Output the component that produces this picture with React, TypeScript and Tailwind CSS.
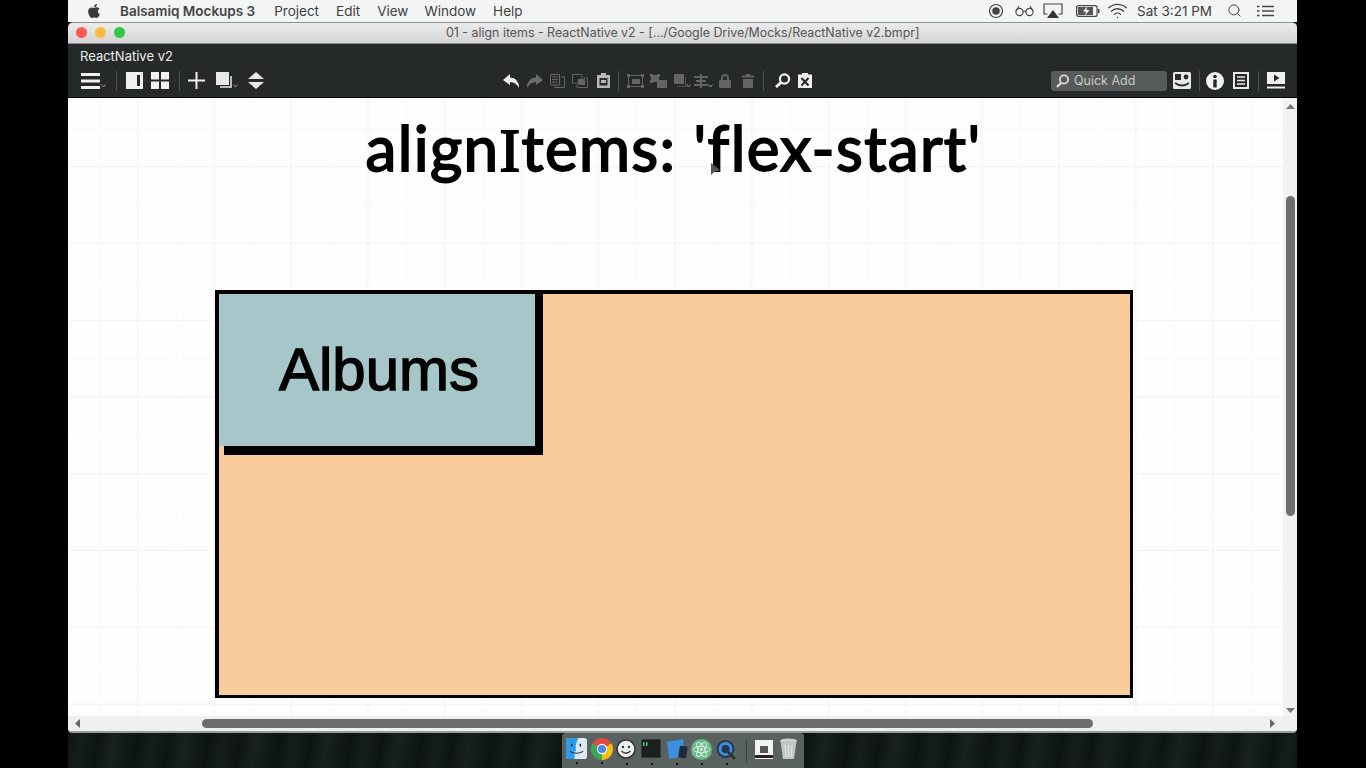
import React from 'react';
import { FaApple } from 'react-icons/fa';
import { Search, Wifi } from 'lucide-react';

const Chevron = ({ className = '' }: { className?: string }) => (
	<svg width="5" height="4" viewBox="0 0 5 4" className={className}>
		<path d="M0.5 0.5 L2.5 3 L4.5 0.5" fill="none" stroke="#9a9a9a" strokeWidth="1" />
	</svg>
);

const Sep = ({ className = '' }: { className?: string }) => <div className={`h-[20px] w-px bg-[#4a4d4e] ${className}`} />;

const MenuBar = () => (
	<div className="flex h-[22px] items-center bg-[#f3f4f4] text-[14px] text-[#3f3f3f] font-['Inter',sans-serif]">
		<FaApple className="ml-[18px] text-[#3a3a3a]" size={16} />
		<span className="ml-[18px] font-semibold text-[13.5px] text-[#444]">Balsamiq Mockups 3</span>
		<span className="ml-[19px] text-[13.5px]">Project</span>
		<span className="ml-[17px] text-[13.5px]">Edit</span>
		<span className="ml-[17px] text-[13.5px]">View</span>
		<span className="ml-[16px] text-[13.5px]">Window</span>
		<span className="ml-[17px] text-[13.5px]">Help</span>
		<div className="ml-auto flex items-center">
			<svg width="16" height="16" viewBox="0 0 16 16">
				<circle cx="8" cy="8" r="6.5" fill="none" stroke="#444" strokeWidth="1.2" />
				<circle cx="8" cy="8" r="3.8" fill="#444" />
			</svg>
			<svg width="19" height="12" viewBox="0 0 19 12" className="ml-[11px]">
				<circle cx="4.5" cy="7" r="3.6" fill="none" stroke="#444" strokeWidth="1.1" />
				<circle cx="14.5" cy="7" r="3.6" fill="none" stroke="#444" strokeWidth="1.1" />
				<path d="M8 7 Q9.5 5.5 11 7 M1 6 L4 1 M18 6 L15 1" fill="none" stroke="#444" strokeWidth="1.1" />
			</svg>
			<svg width="20" height="16" viewBox="0 0 20 16" className="ml-[9px]">
				<path d="M4.5 11 H1 V1 H19 V11 H15.5" fill="none" stroke="#444" strokeWidth="1.2" />
				<path d="M10 7 L16 15 H4 Z" fill="#333" />
			</svg>
			<svg width="24" height="12" viewBox="0 0 24 12" className="ml-[13px]">
				<rect x="0.6" y="0.6" width="20.5" height="10.8" rx="2" fill="none" stroke="#444" strokeWidth="1.2" />
				<rect x="2" y="2" width="15" height="8" fill="#555" />
				<path d="M11 1.5 L7 6.5 H10 L9 10.5 L13.5 5 H10.5 Z" fill="#f3f4f4" />
				<rect x="22" y="4" width="1.5" height="4" fill="#444" />
			</svg>
			<Wifi size={21} strokeWidth={1.5} className="ml-[7px] text-[#444]" />
			<span className="ml-[9px] text-[13.5px] whitespace-nowrap">Sat 3:21 PM</span>
			<Search size={15} strokeWidth={1.6} className="ml-[15px] text-[#444]" />
			<svg width="17" height="12" viewBox="0 0 17 12" className="ml-[15px] mr-[23px]">
				<path d="M5 1.5 H17 M5 6 H17 M5 10.5 H17" stroke="#444" strokeWidth="1.6" />
				<path d="M0 1.5 H2.5 M0 6 H2.5 M0 10.5 H2.5" stroke="#444" strokeWidth="1.6" />
			</svg>
		</div>
	</div>
);

const TitleBar = () => (
	<div className="relative flex h-[22px] items-center rounded-t-[5px] border-y border-y-[#8f9091] bg-gradient-to-b from-[#ececec] to-[#d4d4d4]">
		<div className="ml-[8px] flex gap-[8px]">
			<div className="size-[11px] rounded-full bg-[#fc5b57]" />
			<div className="size-[11px] rounded-full bg-[#fdbc40]" />
			<div className="size-[11px] rounded-full bg-[#33c748]" />
		</div>
		<div className="ml-[321px] text-[12.4px] text-[#555] whitespace-nowrap font-['Inter',sans-serif]">
			01 - align items - ReactNative v2 - [.../Google Drive/Mocks/ReactNative v2.bmpr]
		</div>
	</div>
);

const LeftTools = () => (
	<div className="ml-[13px] flex items-center">
		<svg width="19" height="16" viewBox="0 0 19 16">
			<path d="M0 1.5 H19 M0 8 H19 M0 14.5 H19" stroke="#efefef" strokeWidth="3" />
		</svg>
		<Chevron className="ml-[1px] mt-[10px]" />
		<Sep className="ml-[10px]" />
		<svg width="17" height="17" viewBox="0 0 17 17" className="ml-[9px]">
			<path d="M0 0 H17 V17 H0 Z M11 3 V14 H14 V3 Z" fill="#f0f0f0" fillRule="evenodd" />
		</svg>
		<svg width="18" height="17" viewBox="0 0 18 17" className="ml-[8px]">
			<path d="M0 0 H8 V7.5 H0 Z M10 0 H18 V7.5 H10 Z M0 9.5 H8 V17 H0 Z M10 9.5 H18 V17 H10 Z" fill="#f0f0f0" />
		</svg>
		<Sep className="ml-[10px]" />
		<svg width="17" height="17" viewBox="0 0 17 17" className="ml-[8px]">
			<path d="M8.5 0 V17 M0 8.5 H17" stroke="#f0f0f0" strokeWidth="2" />
		</svg>
		<svg width="17" height="17" viewBox="0 0 17 17" className="ml-[11px]">
			<rect x="0" y="0" width="13" height="13" fill="#e8e8e8" />
			<path d="M15 4 V15 H4" fill="none" stroke="#bdbdbd" strokeWidth="2" />
		</svg>
		<Chevron className="mt-[11px]" />
		<svg width="16" height="17" viewBox="0 0 16 17" className="ml-[10px]">
			<path d="M8 0 L16 7 H0 Z M0 10 H16 L8 17 Z" fill="#e8e8e8" />
		</svg>
	</div>
);

const CenterTools = () => (
	<div className="ml-[239px] flex items-center">
		<svg width="17" height="14" viewBox="0 0 17 14">
			<path d="M7 0 L0 6 L7 11 V8 Q13 8 16 14 Q16 4 7 3.5 Z" fill="#ededed" />
		</svg>
		<svg width="17" height="14" viewBox="0 0 17 14" className="ml-[6px]">
			<path d="M10 0 L17 6 L10 11 V8 Q4 8 1 14 Q1 4 10 3.5 Z" fill="#6a6c6d" />
		</svg>
		<svg width="15" height="14" viewBox="0 0 15 14" className="ml-[7px]">
			<path d="M0.5 0.5 H9.5 V11 H0.5 Z M11 3 H14.5 V13.5 H5 V12" fill="none" stroke="#626465" />
			<path d="M2 3 H8 M2 5.5 H8 M2 8 H8" stroke="#626465" />
		</svg>
		<svg width="16" height="14" viewBox="0 0 16 14" className="ml-[7px]">
			<path d="M0.5 0.5 H10 V9 H0.5 Z M12 4 H15.5 V13.5 H5 V10.5" fill="none" stroke="#626465" />
			<rect x="6" y="5" width="7" height="6" fill="#626465" />
		</svg>
		<svg width="13" height="15" viewBox="0 0 13 15" className="ml-[9px]">
			<path d="M0 2 H4 V0 H9 V2 H13 V15 H0 Z" fill="#b8b8b8" />
			<rect x="2.5" y="5" width="8" height="7.5" fill="#2a2c2d" />
			<rect x="4" y="7" width="5" height="3" fill="#b8b8b8" />
		</svg>
		<Sep className="ml-[8px]" />
		<svg width="17" height="14" viewBox="0 0 17 14" className="ml-[8px]">
			<path d="M1.5 1.5 H15.5 V12.5 H1.5 Z" fill="none" stroke="#626465" />
			<path d="M0 0 H3 V3 H0 Z M14 0 H17 V3 H14 Z M0 11 H3 V14 H0 Z M14 11 H17 V14 H14 Z" fill="#626465" />
			<rect x="5" y="5" width="8" height="5" fill="#626465" />
		</svg>
		<svg width="17" height="14" viewBox="0 0 17 14" className="ml-[6px]">
			<path d="M0 0 H3 V3 H0 Z M7 0 H10 V3 H7 Z M0 6 H3 V9 H0 Z M7 6 H17 V14 H7 Z" fill="#626465" />
			<rect x="1" y="1" width="8" height="7" fill="#626465" />
		</svg>
		<svg width="12" height="13" viewBox="0 0 12 13" className="ml-[7px]">
			<rect width="10" height="10" fill="#626465" />
			<path d="M11.5 3 V12.5 H3" fill="none" stroke="#4f5152" />
		</svg>
		<Chevron className="mt-[10px]" />
		<svg width="14" height="14" viewBox="0 0 14 14" className="ml-[3px]">
			<path d="M7 0 V14 M0 3 H14 M2 7 H12 M0 11 H14" stroke="#626465" strokeWidth="2" />
		</svg>
		<Chevron className="mt-[10px]" />
		<svg width="12" height="14" viewBox="0 0 12 14" className="ml-[6px]">
			<path d="M3 6 V4 A3 3 0 0 1 9 4 V6" fill="none" stroke="#626465" strokeWidth="2" />
			<rect y="6" width="12" height="8" rx="1" fill="#626465" />
		</svg>
		<svg width="12" height="14" viewBox="0 0 12 14" className="ml-[11px]">
			<path d="M4 0 H8 V1.5 H12 V3.5 H0 V1.5 H4 Z M1 5 H11 V14 H1 Z" fill="#626465" />
		</svg>
		<Sep className="ml-[9px]" />
		<svg width="16" height="15" viewBox="0 0 16 15" className="ml-[11px]">
			<circle cx="9.5" cy="6" r="4.6" fill="none" stroke="#efefef" strokeWidth="2.2" />
			<path d="M6 9.5 L1 14" stroke="#efefef" strokeWidth="3" />
		</svg>
		<svg width="14" height="15" viewBox="0 0 14 15" className="ml-[7px]">
			<path d="M0 1.5 H4 V0 H10 V1.5 H14 V15 H0 Z" fill="#efefef" />
			<path d="M3.5 5 L10.5 12.5 M10.5 5 L3.5 12.5" stroke="#25282a" strokeWidth="2" />
		</svg>
	</div>
);

const RightTools = () => (
	<div className="ml-auto mr-[12px] flex items-center">
		<div className="flex h-[20px] w-[116px] items-center rounded-[3px] bg-[#575a5b] pl-[5px] text-[12.5px] text-[#c9c9c9] font-['Inter',sans-serif]">
			<svg width="13" height="14" viewBox="0 0 13 14">
				<circle cx="8" cy="5.5" r="4.2" fill="none" stroke="#dcdcdc" strokeWidth="1.8" />
				<path d="M5 9 L1 13" stroke="#dcdcdc" strokeWidth="2.2" />
			</svg>
			<span className="ml-[5px]">Quick Add</span>
		</div>
		<svg width="18" height="17" viewBox="0 0 18 17" className="ml-[6px]">
			<rect width="18" height="17" rx="1.5" fill="#e8e8e8" />
			<rect x="2" y="2" width="6" height="6" fill="#2a2c2d" />
			<circle cx="13" cy="5" r="2.4" fill="#2a2c2d" />
			<path d="M2 11 Q9 16 16 11" fill="none" stroke="#2a2c2d" strokeWidth="2" />
		</svg>
		<Sep className="ml-[8px]" />
		<svg width="18" height="18" viewBox="0 0 18 18" className="ml-[6px]">
			<circle cx="9" cy="9" r="9" fill="#f2f2f2" />
			<circle cx="9" cy="4.5" r="1.8" fill="#26292a" />
			<rect x="7.3" y="7.5" width="3.4" height="8" fill="#26292a" />
		</svg>
		<svg width="16" height="17" viewBox="0 0 16 17" className="ml-[9px]">
			<rect x="1" y="1" width="14" height="15" fill="none" stroke="#e8e8e8" strokeWidth="2" />
			<path d="M4 5 H12 M4 8.5 H12 M4 12 H12" stroke="#e8e8e8" strokeWidth="1.6" />
		</svg>
		<Sep className="ml-[9px]" />
		<svg width="18" height="17" viewBox="0 0 18 17" className="ml-[8px]">
			<path d="M0 0 H18 V12 H0 Z M7 2.5 V9.5 L12.5 6 Z" fill="#f0f0f0" fillRule="evenodd" />
			<rect y="14.5" width="18" height="2" fill="#f0f0f0" />
		</svg>
	</div>
);

const Toolbar = () => (
	<div className="flex h-[54px] flex-col bg-[#26292a]">
		<div className="ml-[12px] mt-[3px] text-[13px] leading-[18px] text-[#eeeeee] font-['Inter',sans-serif]">ReactNative v2</div>
		<div className="mt-[6px] flex h-[20px] items-center">
			<LeftTools />
			<CenterTools />
			<RightTools />
		</div>
		<div className="mt-auto h-px bg-black" />
	</div>
);

const Canvas = () => (
	<div className="min-w-0 flex-1 bg-[#fefefe] bg-[linear-gradient(to_right,#f4f4f4_1px,transparent_1px),linear-gradient(to_bottom,#f4f4f4_1px,transparent_1px),linear-gradient(to_right,#f9f9f9_1px,transparent_1px),linear-gradient(to_bottom,#f9f9f9_1px,transparent_1px)] bg-[size:76.8px_76.8px,76.8px_76.8px,38.4px_38.4px,38.4px_38.4px] bg-[position:69px_68px,69px_68px,31px_30px,31px_30px]">
		<div className="relative mt-[12px] w-[1215px] text-center">
			<div className="ml-[-4px] h-[74px] text-[62px] leading-[74px] tracking-[1.35px] text-black font-['Lato',sans-serif] font-normal [-webkit-text-stroke:1.8px_black] whitespace-nowrap">
				align<span className="font-['Liberation_Serif',serif]">I</span>tems: 'flex-start'
			</div>
			<svg width="12" height="15" viewBox="0 0 12 15" className="absolute left-[642px] top-[52px]">
				<path d="M1 1 L1 13 L4 10 L10 8 Z" fill="#555" />
			</svg>
		</div>
		<div className="ml-[147px] mt-[106px] h-[408px] w-[918px] border-[4px] border-r-[3px] border-b-[3px] border-black bg-[#f9cc9c]">
			<div className="w-[324px]">
				<div className="flex h-[152px] items-center justify-center border-r-[8px] border-black bg-[#a6c6c9] pl-[4px]">
					<span className="text-[60px] text-black font-['Liberation_Sans',sans-serif] [-webkit-text-stroke:1.4px_black]">Albums</span>
				</div>
				<div className="ml-[5px] h-[9px] bg-black" />
			</div>
		</div>
	</div>
);

const VScroll = () => (
	<div className="flex w-[14px] flex-col items-center bg-[#f2f2f2]">
		<svg width="9" height="5" viewBox="0 0 9 5" className="mt-[6px]">
			<path d="M4.5 0 L9 5 H0 Z" fill="#777" />
		</svg>
		<div className="mt-[87px] h-[320px] w-[9px] rounded-full bg-[#6e6e6e]" />
		<svg width="9" height="5" viewBox="0 0 9 5" className="mt-[192px]">
			<path d="M0 0 H9 L4.5 5 Z" fill="#777" />
		</svg>
	</div>
);

const HScroll = () => (
	<div className="flex h-[17px] items-center rounded-b-[4px] border-b-[2px] border-b-[#9b9b9b] bg-[#f0f0f0]">
		<svg width="5" height="9" viewBox="0 0 5 9" className="ml-[7px]">
			<path d="M5 0 V9 L0 4.5 Z" fill="#666" />
		</svg>
		<div className="ml-[122px] h-[9px] w-[891px] rounded-full bg-[#6e6e6e]" />
		<svg width="5" height="9" viewBox="0 0 5 9" className="ml-[177px]">
			<path d="M0 0 V9 L5 4.5 Z" fill="#666" />
		</svg>
	</div>
);

const DockIcon = ({ children }: { children: React.ReactNode }) => (
	<div className="h-[29px] w-[25px]">
		<div className="h-[24px]">{children}</div>
		<div className="ml-[10px] size-[2px] rounded-full bg-black" />
	</div>
);

const Dock = () => (
	<div className="mx-auto flex h-[35px] w-[242px] items-start rounded-t-[4px] bg-[#5a625f] pl-[4px] pt-[5px]">
		<DockIcon>
			<svg width="21" height="21" viewBox="0 0 22 22">
				<rect width="22" height="22" rx="3" fill="#dce8f4" />
				<path d="M0 3 A3 3 0 0 1 3 0 H13 Q9 8 10.5 14 H9 V22 H3 A3 3 0 0 1 0 19 Z" fill="#2e9be8" />
				<path d="M6 6 V9 M15 6 V9" stroke="#123" strokeWidth="1.5" />
				<path d="M4 14 Q11 18 18 14" fill="none" stroke="#123" strokeWidth="1" />
			</svg>
		</DockIcon>
		<DockIcon>
			<svg width="22" height="22" viewBox="0 0 22 22">
				<circle cx="11" cy="11" r="11" fill="#dd4b3e" />
				<path d="M11 11 L20.5 5.5 A11 11 0 0 1 11 22 Z" fill="#f4c20d" />
				<path d="M11 11 L11 22 A11 11 0 0 1 1.5 5.5 Z" fill="#3aa757" />
				<circle cx="11" cy="11" r="5.2" fill="#fff" />
				<circle cx="11" cy="11" r="4" fill="#4a86e8" />
			</svg>
		</DockIcon>
		<DockIcon>
			<svg width="20" height="20" viewBox="0 0 20 20" className="mt-[1px]">
				<circle cx="10" cy="10" r="9" fill="#eeeeee" stroke="#333" strokeWidth="1.5" />
				<circle cx="7" cy="8" r="1.2" fill="#333" />
				<circle cx="13" cy="8" r="1.2" fill="#333" />
				<path d="M5.5 12 Q10 16.5 14.5 12" fill="none" stroke="#333" strokeWidth="1.3" />
			</svg>
		</DockIcon>
		<DockIcon>
			<svg width="20" height="20" viewBox="0 0 20 20" className="mt-[1px]">
				<rect width="20" height="19" fill="#1a1f1f" stroke="#555" />
				<rect x="2" y="3" width="1.5" height="4" fill="#53c25a" />
				<rect x="5" y="3" width="1.5" height="4" fill="#53c25a" />
			</svg>
		</DockIcon>
		<DockIcon>
			<svg width="22" height="20" viewBox="0 0 22 20" className="mt-[1px]">
				<path d="M1 3 L17 0 L19 17 L3 20 Z" fill="#3d8fe0" />
				<rect x="13" y="7" width="8" height="12" rx="1.5" fill="#1c2a3a" transform="rotate(8 17 13)" />
			</svg>
		</DockIcon>
		<DockIcon>
			<svg width="21" height="21" viewBox="0 0 21 21" className="mt-[1px]">
				<circle cx="10.5" cy="10.5" r="10.5" fill="#6cb98a" />
				<g fill="none" stroke="#e4f3e8" strokeWidth="0.9">
					<ellipse cx="10.5" cy="10.5" rx="8" ry="3.2" />
					<ellipse cx="10.5" cy="10.5" rx="8" ry="3.2" transform="rotate(60 10.5 10.5)" />
					<ellipse cx="10.5" cy="10.5" rx="8" ry="3.2" transform="rotate(120 10.5 10.5)" />
				</g>
				<circle cx="10.5" cy="10.5" r="1.4" fill="#e4f3e8" />
			</svg>
		</DockIcon>
		<DockIcon>
			<svg width="20" height="21" viewBox="0 0 20 21" className="mt-[1px]">
				<circle cx="9.5" cy="10" r="9" fill="#24364f" />
				<circle cx="9.5" cy="10" r="5.5" fill="none" stroke="#3f8be0" strokeWidth="3" />
				<path d="M12 13 L19 20" stroke="#333" strokeWidth="3" />
			</svg>
		</DockIcon>
		<div className="ml-[5px] mt-[1px] h-[24px] w-px bg-[#3d4442]" />
		<svg width="18" height="22" viewBox="0 0 18 22" className="ml-[8px]">
			<rect x="0" y="2" width="18" height="19" fill="#f4f4f4" />
			<rect x="5" y="8" width="8" height="7" fill="#555" />
			<rect x="0" y="17" width="18" height="3" fill="#222" />
		</svg>
		<svg width="17" height="22" viewBox="0 0 17 22" className="ml-[7px]">
			<ellipse cx="8.5" cy="3" rx="8.5" ry="2.6" fill="#cfd3d2" />
			<path d="M0.5 3 L3 21 H14 L16.5 3 Z" fill="#c2c7c6" />
			<path d="M5 7 L6 19 M8.5 7 V19 M12 7 L11 19" stroke="#e6e8e8" />
		</svg>
	</div>
);

const App = () => {
	return (
		<div className="flex h-screen w-full justify-center overflow-hidden bg-black">
			<div className="ml-[-1px] flex h-full w-[1229px] flex-col">
				<MenuBar />
				<TitleBar />
				<Toolbar />
				<div className="flex h-[619px]">
					<Canvas />
					<VScroll />
				</div>
				<HScroll />
				<div className="flex-1 bg-[#0f1713] bg-[repeating-linear-gradient(100deg,#0d1410_0px,#151f1a_14px,#0e1511_31px,#18221c_46px,#0d1410_70px)]">
					<Dock />
				</div>
			</div>
		</div>
	);
};

export default App;
